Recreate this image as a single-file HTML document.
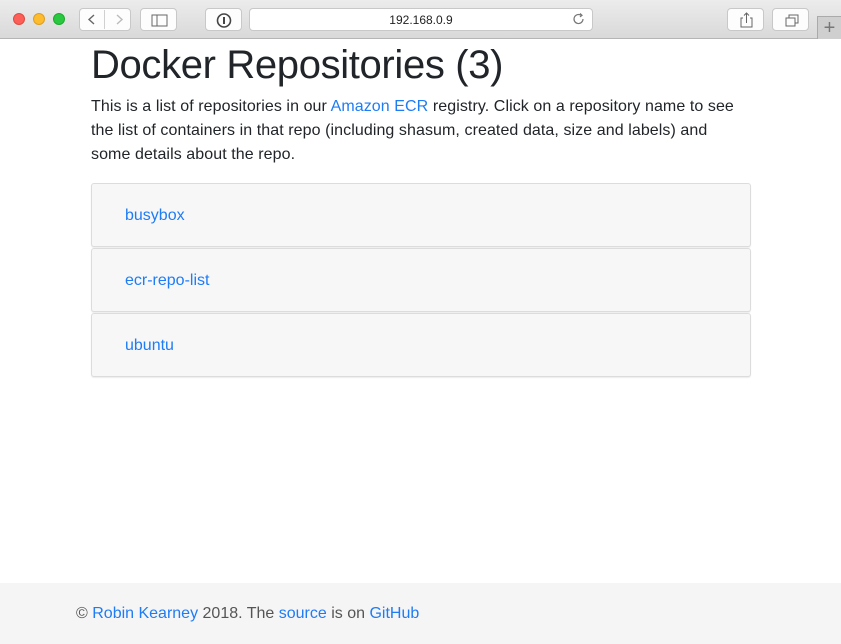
<!DOCTYPE html>
<html><head><meta charset="utf-8"><style>
*{margin:0;padding:0;box-sizing:border-box}
body{width:841px;height:644px;overflow:hidden;font-family:"Liberation Sans",sans-serif;background:#fff;position:relative;color:#212529}
.tb{position:absolute;left:0;top:0;width:841px;height:39px;background:linear-gradient(#ececec,#d9d9d9);border-bottom:1px solid #b5b5b5}
.dot{position:absolute;top:13px;width:12px;height:12px;border-radius:50%}
.btn{position:absolute;top:8px;height:23px;background:#fdfdfd;border:1px solid #c8c8c8;border-radius:4px}
.url{position:absolute;left:249px;top:8px;width:344px;height:23px;background:#fff;border:1px solid #c8c8c8;border-radius:4px;font-size:12px;text-align:center;line-height:22px;color:#222}
a{color:#1e7cf5;text-decoration:none}
h1{position:absolute;left:91px;top:40px;font-size:40px;font-weight:400;line-height:50px;letter-spacing:-0.35px}
p{position:absolute;left:91px;top:95px;width:652px;font-size:16px;line-height:24px;letter-spacing:0.08px}
.item{position:absolute;left:91px;width:660px;height:64px;background:#f7f7f7;border:1px solid #dcdcdc;border-radius:3px;box-shadow:0 1px 1px rgba(0,0,0,.08);padding-left:33px;padding-top:1px;line-height:62px;font-size:16px}
.ft{position:absolute;left:0;top:583px;width:841px;height:61px;background:#f5f5f5;font-size:16px;line-height:61px;padding-left:76px;color:#555}
</style></head><body>
<div class="tb">
<div class="dot" style="left:13px;background:#fc5f57;border:1px solid #de4a42"></div>
<div class="dot" style="left:33px;background:#fdbb2e;border:1px solid #dd9e23"></div>
<div class="dot" style="left:53px;background:#29c840;border:1px solid #1daa2c"></div>
<div class="btn" style="left:79px;width:52px"></div>
<div style="position:absolute;left:104px;top:10px;width:1px;height:19px;background:#d0d0d0"></div>
<svg style="position:absolute;left:79px;top:8px" width="52" height="23"><path d="M15 7l-5 4.5 5 4.5" fill="none" stroke="#666" stroke-width="1.4"/><path d="M38 7l5 4.5-5 4.5" fill="none" stroke="#bbb" stroke-width="1.4"/></svg>
<div class="btn" style="left:140px;width:37px"><svg width="37" height="23"><rect x="11" y="6" width="15" height="11" fill="none" stroke="#666"/><line x1="16" y1="6" x2="16" y2="17" stroke="#666"/></svg></div>
<div class="btn" style="left:205px;width:37px"><svg width="37" height="23"><circle cx="18" cy="11.5" r="6.5" fill="none" stroke="#444" stroke-width="1.6"/><rect x="17" y="8" width="2" height="7" fill="#444"/></svg></div>
<div class="url">192.168.0.9</div>
<svg style="position:absolute;left:572px;top:12px" width="14" height="14"><path d="M11 7a4.5 4.5 0 1 1-2-3.7" fill="none" stroke="#777" stroke-width="1.2"/><path d="M8 1.5l2 1.8-2 1.6" fill="none" stroke="#777" stroke-width="1.2"/></svg>
<div class="btn" style="left:727px;width:37px"><svg width="37" height="23"><path d="M15 9h-2v9h11v-9h-2M18.5 4v10M16 6.5l2.5-2.5 2.5 2.5" fill="none" stroke="#666"/></svg></div>
<div class="btn" style="left:772px;width:37px"><svg width="37" height="23"><rect x="13" y="9" width="9" height="8" fill="none" stroke="#666"/><path d="M16 9V6h9v8h-3" fill="none" stroke="#666"/></svg></div>
<div style="position:absolute;left:817px;top:16px;width:24px;height:23px;background:#cfcfcf;border-left:1px solid #aaa;border-top:1px solid #aaa;color:#777;font-size:20px;text-align:center;line-height:22px">+</div>
</div>
<h1>Docker Repositories (3)</h1>
<p>This is a list of repositories in our <a>Amazon ECR</a> registry. Click on a repository name to see the list of containers in that repo (including shasum, created data, size and labels) and some details about the repo.</p>
<div class="item" style="top:183px"><a>busybox</a></div>
<div class="item" style="top:248px"><a>ecr-repo-list</a></div>
<div class="item" style="top:313px"><a>ubuntu</a></div>
<div class="ft">© <a>Robin Kearney</a> 2018. The <a>source</a> is on <a>GitHub</a></div>
</body></html>
